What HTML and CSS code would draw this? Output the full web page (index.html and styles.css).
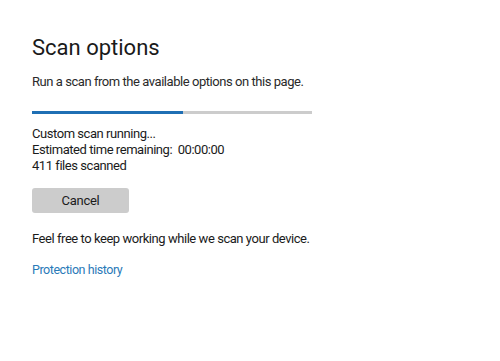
FILE: index.html
```html
<!DOCTYPE html>
<html>
<head>
<meta charset="utf-8">
<link rel="stylesheet" href="styles.css">
</head>
<body>
<main class="page">
  <h1 class="title">Scan options</h1>
  <p class="subtitle">Run a scan from the available options on this page.</p>
  <div class="progress"><div class="progress-fill" style="width: 54%"></div></div>
  <div class="status">
    <div>Custom scan running...</div>
    <div>Estimated time remaining:&nbsp; 00:00:00</div>
    <div>411 files scanned</div>
  </div>
  <button class="btn">Cancel</button>
  <p class="note">Feel free to keep working while we scan your device.</p>
  <a class="link" href="#">Protection history</a>
</main>
</body>
</html>
```

FILE: styles.css
```css
html, body {
  margin: 0;
  padding: 0;
  background: #ffffff;
}
body {
  font-family: Roboto, "Open Sans", sans-serif;
  color: #1b1b1b;
  font-size: 13px;
  letter-spacing: -0.45px;
}
.page {
  display: flex;
  flex-direction: column;
  align-items: flex-start;
  padding: 32px 0 0 32px;
}
.title {
  margin: 0;
  font-weight: 400;
  font-size: 22px;
  line-height: 32px;
  letter-spacing: 0;
  color: #1a1a1a;
}
.subtitle {
  margin: 9px 0 0;
  line-height: 18px;
  color: #2a2a2a;
}
.progress {
  margin-top: 20px;
  width: 280px;
  height: 3px;
  background: #cccccc;
}
.progress-fill {
  height: 100%;
  background: #1f6fb4;
}
.status {
  margin-top: 12px;
  line-height: 16px;
  color: #1b1b1b;
}
.btn {
  margin-top: 14px;
  width: 97px;
  height: 25px;
  border: none;
  border-radius: 3px;
  background: #cccccc;
  font-family: inherit;
  font-size: 13px;
  letter-spacing: -0.3px;
  color: #1b1b1b;
  padding: 0;
}
.note {
  margin: 17px 0 0;
  line-height: 18px;
}
.link {
  margin-top: 13px;
  line-height: 18px;
  color: #2a7ab8;
  text-decoration: none;
  font-size: 12.5px;
}
```
